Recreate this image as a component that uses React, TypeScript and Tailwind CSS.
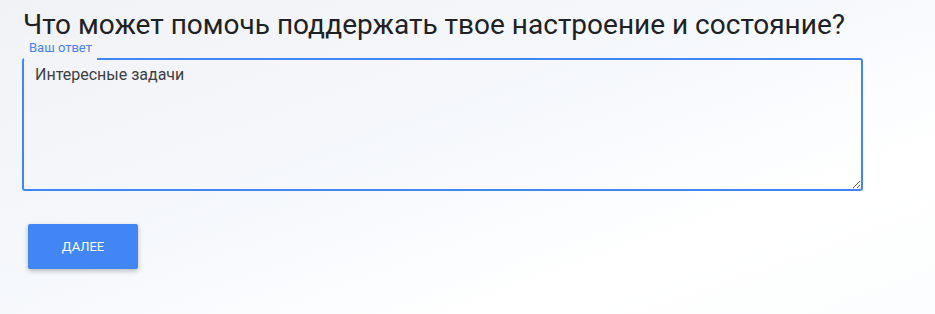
import React from "react";

export default function App() {
  return (
    <div className="min-h-[314px] w-full bg-[linear-gradient(160deg,#f1f2f5_0%,#f5f8fc_45%,#ffffff_75%,#fcfdfe_100%)] font-['Roboto',sans-serif] pl-[22px] pt-[8px]">
      <h1 className="text-[28px] leading-[34px] text-[#202124] pl-[1px]">
        Что может помочь поддержать твое настроение и состояние?
      </h1>
      <div className="relative mt-[16px] w-[841px]">
        <span className="absolute left-[2px] top-[-20px] bg-[#f2f4f7] px-[5px] pt-[1px] pb-[4px] text-[13px] leading-[17px] text-[#4a7ef0]">
          Ваш ответ
        </span>
        <textarea
          defaultValue="Интересные задачи"
          className="block h-[133px] w-full rounded-[3px] border-2 border-[#4285f4] bg-transparent px-[11px] py-[4px] text-[16px] leading-[22px] text-[#3c4043] outline-none"
        />
      </div>
      <button className="mt-[33px] ml-[6px] h-[45px] w-[110px] rounded-[2px] bg-[#4285f4] text-[13px] font-normal text-white shadow-[0_2px_5px_rgba(0,0,0,0.25)]">
        ДАЛЕЕ
      </button>
    </div>
  );
}
